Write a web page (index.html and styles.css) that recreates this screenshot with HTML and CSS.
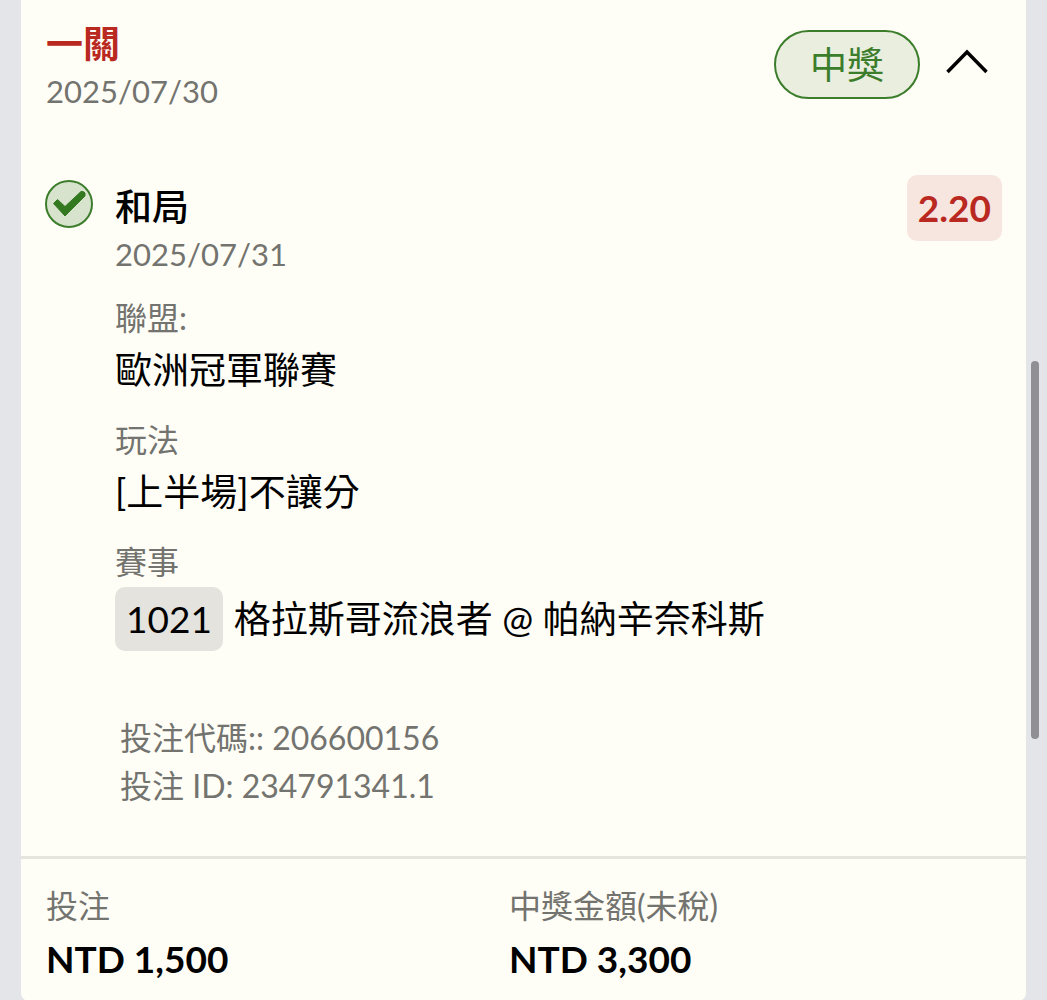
FILE: index.html
```html
<!DOCTYPE html>
<html lang="zh-Hant">
<head>
    <meta charset="UTF-8">
    <meta name="viewport" content="width=device-width, initial-scale=1.0">
    <title>投注紀錄</title>
    <link rel="stylesheet" href="styles.css">
</head>
<body>
    <main class="ticket">
        <header class="ticket-header">
            <div>
                <h1 class="ticket-type">一關</h1>
                <time class="date" datetime="2025-07-30">2025/07/30</time>
            </div>
            <div class="ticket-status">
                <span class="status-pill">中獎</span>
                <button type="button" class="toggle" aria-label="收合" aria-expanded="true">
                    <svg viewBox="0 0 42 26" width="42" height="26" aria-hidden="true">
                        <path d="M1.500 24 21 4 40.500 24" fill="none" stroke="#000" stroke-width="3.500"/>
                    </svg>
                </button>
            </div>
        </header>

        <section class="bet">
            <svg class="bet-icon" viewBox="0 0 48 48" width="48" height="48" aria-hidden="true">
                <circle cx="24" cy="24" r="23" fill="#d7e3cd" stroke="#3c7d2c" stroke-width="2"/>
                <path d="M8.500 23.500 12.500 19.500 20 26.500 36 11.500Q39 11 40 13L40 16 20 36Z" fill="#32791f" stroke="#32791f" stroke-width="1" stroke-linejoin="round"/>
            </svg>
            <div class="bet-body">
                <div class="bet-top">
                    <div>
                        <h2 class="bet-pick">和局</h2>
                        <time class="date" datetime="2025-07-31">2025/07/31</time>
                    </div>
                    <span class="odds">2.20</span>
                </div>

                <dl class="fields">
                    <div>
                        <dt>聯盟:</dt>
                        <dd>歐洲冠軍聯賽</dd>
                    </div>
                    <div>
                        <dt>玩法</dt>
                        <dd>[上半場]不讓分</dd>
                    </div>
                    <div>
                        <dt>賽事</dt>
                        <dd class="match"><span class="match-no">1021</span><span>格拉斯哥流浪者 @ 帕納辛奈科斯</span></dd>
                    </div>
                </dl>

                <div class="codes">
                    <p>投注代碼:: 206600156</p>
                    <p>投注 ID: 234791341.1</p>
                </div>
            </div>
        </section>

        <!-- Totals -->
        <dl class="totals">
            <div>
                <dt>投注</dt>
                <dd>NTD 1,500</dd>
            </div>
            <div>
                <dt>中獎金額(未稅)</dt>
                <dd>NTD 3,300</dd>
            </div>
        </dl>
    </main>
    <div class="scroll-thumb"></div>
</body>
</html>
```
FILE: styles.css
```css
* {
    box-sizing: border-box;
}

body {
    margin: 0;
    padding: 0 21px;
    background: #e3e5e8;
    color: #000;
    font-family: Lato, "Noto Sans CJK TC", sans-serif;
    font-size: 37px;
    overflow: hidden;
}

h1, h2, p, dl, dd {
    margin: 0;
}

.ticket {
    background: #fffef6;
    border-radius: 0 0 8px 8px;
}

/* Header */
.ticket-header {
    display: flex;
    justify-content: space-between;
    align-items: flex-start;
    padding: 20px 38px 0 25px;
}

.ticket-type {
    color: #b9291f;
    font-size: 37px;
    font-weight: 700;
    line-height: 48px;
}

.date {
    display: block;
    color: #73736f;
    font-size: 31px;
    line-height: 46px;
}

.ticket-status {
    display: flex;
    align-items: center;
    gap: 26px;
    padding-top: 10px;
}

.status-pill {
    padding: 0 34px;
    border: 2px solid #3c7d2c;
    border-radius: 35px;
    background: #e9eedf;
    color: #3c7d2c;
    line-height: 65px;
}

.toggle {
    display: flex;
    padding: 0 0 8px;
    border: none;
    background: none;
    cursor: pointer;
}

/* Bet */
.bet {
    display: flex;
    gap: 22px;
    padding: 61px 24px 46px;
}

.bet-icon {
    flex: none;
    margin-top: 5px;
}

.bet-body {
    flex: 1;
}

.bet-top {
    display: flex;
    justify-content: space-between;
    align-items: flex-start;
}

.bet-pick {
    padding-top: 8px;
    font-size: 37px;
    font-weight: 500;
    line-height: 48px;
}

.odds {
    padding: 0 11px;
    border-radius: 10px;
    background: #f7e6e0;
    color: #b9291f;
    font-weight: 700;
    line-height: 66px;
}

.fields {
    display: grid;
    gap: 18px;
    margin-top: 17px;
}

dt {
    color: #73736f;
    font-size: 32px;
    line-height: 48px;
}

.fields dd {
    line-height: 56px;
}

.fields .match {
    display: flex;
    align-items: center;
    gap: 11px;
    padding-top: 1px;
    line-height: 64px;
}

.match-no {
    padding: 0 11px;
    border-radius: 10px;
    background: #e5e3dd;
}

.codes {
    margin-top: 63px;
    padding-left: 5px;
    color: #73736f;
    font-size: 32px;
    line-height: 48px;
}

/* Totals */
.totals {
    display: grid;
    grid-template-columns: 463fr 492fr;
    padding: 23px 25px 13px;
    border-top: 3px solid #e5e4dd;
}

.totals dd {
    font-size: 37px;
    font-weight: 700;
    line-height: 58px;
}

.scroll-thumb {
    position: fixed;
    top: 361px;
    right: 8px;
    width: 8px;
    height: 378px;
    border-radius: 4px;
    background: #8f8f94;
}
```
